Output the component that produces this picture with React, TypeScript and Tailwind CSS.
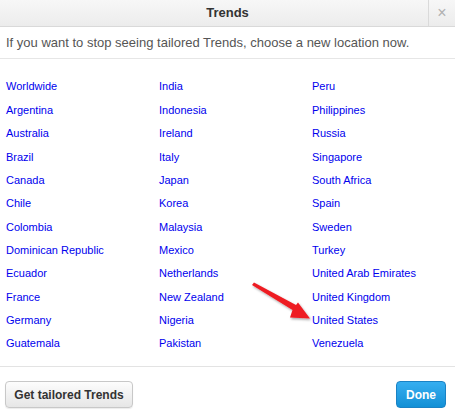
import React from "react";

const cols = [
  ["Worldwide","Argentina","Australia","Brazil","Canada","Chile","Colombia","Dominican Republic","Ecuador","France","Germany","Guatemala"],
  ["India","Indonesia","Ireland","Italy","Japan","Korea","Malaysia","Mexico","Netherlands","New Zealand","Nigeria","Pakistan"],
  ["Peru","Philippines","Russia","Singapore","South Africa","Spain","Sweden","Turkey","United Arab Emirates","United Kingdom","United States","Venezuela"],
];

export default function App() {
  return (
    <div className="relative w-[455px] h-[418px] bg-white overflow-hidden" style={{ fontFamily: '"Liberation Sans", Arial, sans-serif' }}>
      <div className="flex h-[27px] border-b border-[#d9d9d9] bg-gradient-to-b from-[#f7f7f7] to-[#ececec]">
        <div className="flex-1 flex items-center justify-center text-[13px] font-bold text-[#333] pl-[27px]">Trends</div>
        <div className="w-[27px] border-l border-[#dadada] flex items-center justify-center text-[#b0b0b0] text-[16px] leading-none">×</div>
      </div>
      <div className="h-[32px] flex items-center px-[6px] text-[13px] text-[#555] border-b border-[#e6e6e6]">
        If you want to stop seeing tailored Trends, choose a new location now.
      </div>
      <div className="grid grid-cols-[153px_153px_1fr] pl-[6px] pt-[16px] pb-[11px] border-b border-[#e3e3e3]">
        {cols.map((c, i) => (
          <div key={i} className="flex flex-col">
            {c.map((n) => (
              <div key={n} className="h-[23.36px] flex items-center text-[11px] text-[#0000ee]">{n}</div>
            ))}
          </div>
        ))}
      </div>
      <div className="flex justify-between items-start px-[5px] pt-[14px]">
        <button className="h-[27px] w-[128px] rounded-[4px] border border-[#c8c8c8] bg-gradient-to-b from-[#fdfdfd] to-[#e6e6e6] text-[12px] font-bold text-[#333] shadow-[0_1px_1px_rgba(0,0,0,0.08)]">Get tailored Trends</button>
        <button className="h-[27px] w-[50px] mr-[4px] rounded-[4px] border border-[#1a82c4] bg-gradient-to-b from-[#35aef0] to-[#1190d6] text-[12px] font-bold text-white">Done</button>
      </div>
      <svg className="absolute left-0 top-0 pointer-events-none" width="455" height="418">
        <defs>
          <filter id="sh" x="-20%" y="-20%" width="140%" height="140%">
            <feDropShadow dx="1" dy="1.5" stdDeviation="1" floodColor="#000" floodOpacity="0.35" />
          </filter>
        </defs>
        <polygon filter="url(#sh)" fill="#ee1c24" points="252,285 254,282.5 296,305 298,302.5 310,318.5 290,317.5 292.5,310" />
      </svg>
    </div>
  );
}
